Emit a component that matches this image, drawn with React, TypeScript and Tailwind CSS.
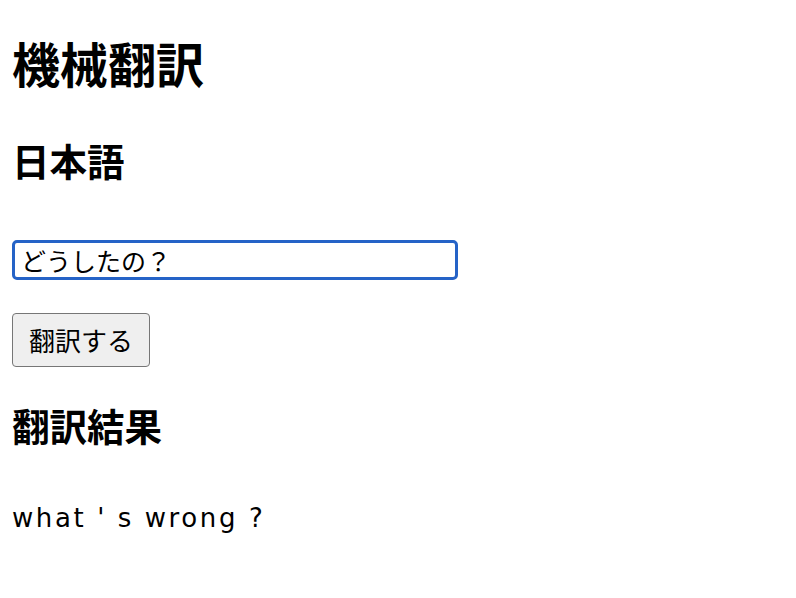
export default function App() {
  return (
    <div className="flex flex-col items-start px-[12px] text-black bg-white min-h-screen font-['Noto_Sans_CJK_JP','Noto_Sans',sans-serif]">
      <h1 className="mt-[34px] text-[48px] leading-[56px] font-bold">機械翻訳</h1>
      <h2 className="mt-[48px] text-[37.5px] leading-[44px] font-bold">日本語</h2>
      <input
        type="text"
        defaultValue="どうしたの？"
        className="mt-[58px] w-[446px] h-[40px] border-[3px] border-[#2563c7] rounded-[5px] pl-[6px] text-[25px] leading-[30px] outline-none"
      />
      <button className="mt-[33px] h-[54px] px-[16px] bg-[#efefef] border-[1.5px] border-[#767676] rounded-[4px] text-[26px] leading-[30px]">
        翻訳する
      </button>
      <h2 className="mt-[36px] text-[37.5px] leading-[44px] font-bold">翻訳結果</h2>
      <p className="mt-[55px] text-[26px] leading-[32px] tracking-[2.6px] font-['DejaVu_Sans','Noto_Sans_CJK_JP',sans-serif]">
        what ' s wrong ?
      </p>
    </div>
  );
}
